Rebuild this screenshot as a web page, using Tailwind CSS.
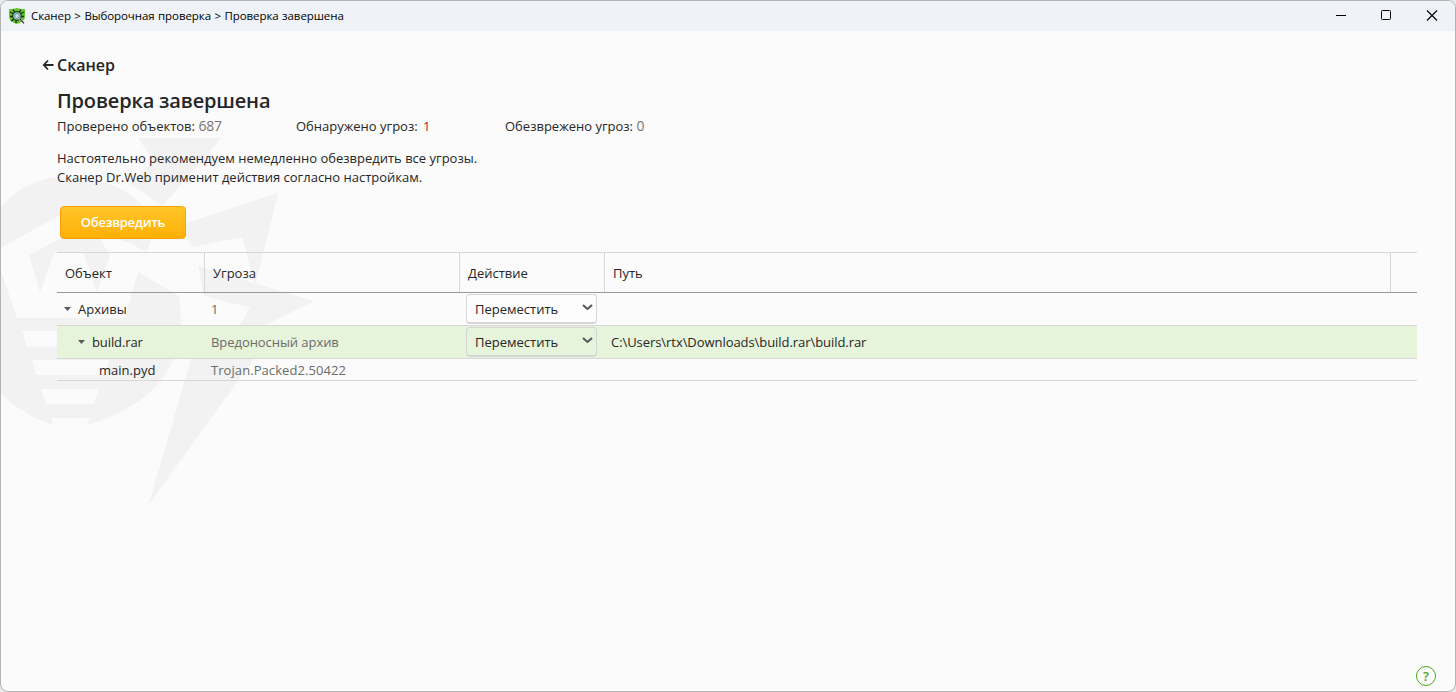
<!DOCTYPE html>
<html lang="ru">
<head>
<meta charset="utf-8">
<title>Сканер</title>
<script src="https://cdn.jsdelivr.net/npm/@tailwindcss/browser@4"></script>
</head>
<body class="h-screen overflow-hidden bg-[#e9e9e9] font-['Open_Sans','Noto_Sans',sans-serif] text-[13px] leading-[19px] text-[#262626]">
<div class="relative isolate flex h-[692px] w-[1456px] flex-col overflow-hidden rounded-lg border border-[#b3b3b3] bg-[#fbfbfb]">

  <!-- Watermark -->
  <svg class="absolute -left-px -top-px -z-10 h-[520px] w-[330px]" viewBox="0 0 330 520" fill="#f2f2f2">
    <path d="M138 138H221.500L162.500 206L130.500 184L153 160Z"/>
    <path d="M0 209C14 191 35 177 65 177C102 177 131 190 143 207Q150 217 153 231Q151 240 146.500 252Q128 241 113 238Q88 226 66 212L0 248Z"/>
    <path d="M0 272L2 273L17 318H125L138 272L179 296Q183 320 178 346C171 375 146 408 87 425L90 418H51L53 425C35 420 12 405 0 393Z"/>
    <path d="M29 255L62 238H100L110 256L97 293L83 253H54L40 293Z"/>
    <g fill="#fbfbfb">
      <path d="M2 273L17 318H55L63 293L74 318H122L138 272L110 256L97 293L83 253H54L40 293L29 255Z"/>
      <path d="M22 331H118L113 346.500H27Z"/>
      <path d="M32 360H109L104 375H36Z"/>
      <path d="M41 389H99L94 404H46Z"/>
    </g>
    <path d="M180 225L278 193L255 286L242.500 237L192 247Z"/>
    <path d="M198 266L314 301L252 332L240 325L250 307.500L204 296Z"/>
    <path d="M149 504L192 355H252L253 360Z"/>
  </svg>

  <header class="flex h-[30px] shrink-0 items-center bg-[#eff3f8] pl-2 text-[11.5px] text-black">
    <svg class="h-4 w-4" viewBox="0 0 16 16">
      <path d="M0 1Q4 1.500 8 0Q12 1.500 16 1V9Q15.500 14 8 16Q.5 14 0 9Z" fill="#62c62b"/>
      <g stroke="#17300b" stroke-width="1.300" fill="none"><path d="M1 4l4 2M1 8.500h4M2 13l3.500-2.500M4 1.500l2 3.500M12 1.500L10 5M15 4l-4 2M15 8.500h-4M7 12v3"/></g>
      <circle cx="8" cy="8" r="4.300" fill="#9fc6c4" stroke="#26371f" stroke-width="1.200"/>
      <circle cx="8" cy="8" r="2.300" fill="#cfe3e6" stroke="#5c8385" stroke-width=".8"/>
      <path d="M11 11l4 4.300" stroke="#eee" stroke-width="2.200"/><path d="M11 11l4 4.300" stroke="#333" stroke-width="1.200"/>
    </svg>
    <span class="ml-1.5 pb-0.5 tracking-[-0.08px] [word-spacing:0.6px]">Сканер &gt; Выборочная проверка &gt; Проверка завершена</span>
    <div class="ml-auto flex h-full">
      <svg class="h-[30px] w-[46px]" viewBox="0 0 46 30"><path d="M19 14.500H29" stroke="#000"/></svg>
      <svg class="h-[30px] w-[46px]" viewBox="0 0 46 30"><rect x="18.500" y="9.500" width="9" height="9" rx="1" fill="none" stroke="#000"/></svg>
      <svg class="h-[30px] w-[46px]" viewBox="0 0 46 30"><path d="M18 9.500L28 19.500M28 9.500L18 19.500" fill="none" stroke="#000" stroke-width="1.100"/></svg>
    </div>
  </header>

  <main class="flex flex-1 flex-col pl-14">
    <div class="-ml-[15px] mt-[22px] flex h-6 items-center text-base font-semibold">
      <svg class="mr-px h-3 w-[14px]" viewBox="0 0 14 12" fill="none" stroke="#262626" stroke-width="1.800"><path d="M2 6H11.500M6 1.500L1.800 6L6 10.500"/></svg>
      <span>Сканер</span>
    </div>
    <h1 class="mt-[10px] h-7 text-[20px] font-semibold leading-7 tracking-[-0.16px]">Проверка завершена</h1>
    <div class="mt-[2px] flex h-[19px]">
      <p class="w-[239px]">Проверено объектов: <span class="text-[14px] leading-none tracking-[-0.2px] text-[#757575]">687</span></p>
      <p class="w-[209px]">Обнаружено угроз: <span class="ml-0.5 text-[#c8102e]">1</span></p>
      <p>Обезврежено угроз: <span class="text-[14px] leading-none text-[#757575]">0</span></p>
    </div>
    <p class="mt-[13px]">Настоятельно рекомендуем немедленно обезвредить все угрозы.<br>Сканер Dr.Web применит действия согласно настройкам.</p>
    <button class="ml-[3px] mt-[19px] h-[33px] w-[126px] rounded border border-[#ff9d0a] bg-linear-to-b from-[#ffc627] to-[#ffb000] text-[13px] font-semibold tracking-[-0.25px] text-white">Обезвредить</button>

    <section class="mt-[13px] w-[1360px]">
      <div class="grid h-[41px] grid-cols-[148px_255px_145px_786px_26px] border-b border-t border-b-[#999] border-t-[#d6d6d6] *:flex *:items-center *:border-r *:border-[#d6d6d6] *:pl-2 *:pt-px">
        <div>Объект</div><div>Угроза</div><div>Действие</div><div>Путь</div><div class="border-r-0!"></div>
      </div>
      <div class="grid h-8 grid-cols-[147px_262px_138px_813px] items-center">
        <div class="flex items-center pl-[7px]"><svg class="mr-[7px] h-1 w-[7px]" viewBox="0 0 7 4"><path d="M0 0H7L3.500 4Z" fill="#5a5a5a"/></svg>Архивы</div>
        <div class="pl-[7px] text-[#6b6b6b]">1</div>
        <div class="flex h-[30px] w-[131px] items-center justify-between rounded border border-b-2 border-[#d6d6d6] bg-white/60 pl-2 pr-[3px] pt-px">Переместить<svg class="-mt-1 h-[7px] w-[11px]" viewBox="0 0 11 7"><path d="M1 1L5.500 5L10 1" fill="none" stroke="#555" stroke-width="2"/></svg></div>
      </div>
      <div class="grid h-[34px] grid-cols-[147px_262px_138px_813px] items-center border-y border-[#d6d6d6] bg-[#e7f4dc]">
        <div class="flex items-center pl-[21px]"><svg class="mr-[7px] h-1 w-[7px]" viewBox="0 0 7 4"><path d="M0 0H7L3.500 4Z" fill="#5a5a5a"/></svg><span class="tracking-[-0.1px]">build.rar</span></div>
        <div class="pl-[7px] tracking-[-0.06px] text-[#6b6b6b]">Вредоносный архив</div>
        <div class="flex h-[30px] w-[131px] items-center justify-between rounded border border-b-2 border-[#d6d6d6] pl-2 pr-[3px] pt-px">Переместить<svg class="-mt-1 h-[7px] w-[11px]" viewBox="0 0 11 7"><path d="M1 1L5.500 5L10 1" fill="none" stroke="#555" stroke-width="2"/></svg></div>
        <div class="pl-[7px] tracking-[-0.06px]">C:\Users\rtx\Downloads\build.rar\build.rar</div>
      </div>
      <div class="grid h-[22px] grid-cols-[147px_1213px] items-center border-b border-[#d6d6d6] pt-0.5">
        <div class="pl-[42px]">main.pyd</div>
        <div class="pl-[7px] tracking-[0.07px] text-[#6b6b6b]">Trojan.Packed2.50422</div>
      </div>
    </section>

    <div class="mb-[5px] mr-[19px] mt-auto flex h-5 w-5 items-center justify-center self-end rounded-full border-[1.5px] border-[#4aa51c] text-[13px] font-semibold text-[#4aa51c]">?</div>
  </main>
</div>
</body>
</html>
